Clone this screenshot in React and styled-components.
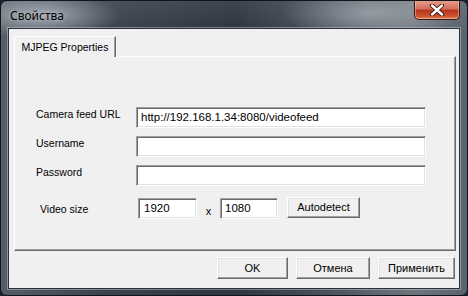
import React from "react";
import styled, { createGlobalStyle } from "styled-components";

const GlobalStyle = createGlobalStyle`
  html, body {
    margin: 0;
    padding: 0;
    background: #1b2230;
  }
  body {
    font-family: "Liberation Sans", Arial, sans-serif;
  }
`;

const Window = styled.div`
  width: 468px;
  height: 296px;
  box-sizing: border-box;
  display: flex;
  flex-direction: column;
  padding: 0 7px 6px 7px;
  border-radius: 7px;
  overflow: hidden;
  background:
    radial-gradient(ellipse 80px 24px at 40px 14px, rgba(178, 184, 192, 0.85), rgba(178, 184, 192, 0) 100%),
    radial-gradient(ellipse 90px 26px at 370px 12px, rgba(170, 176, 184, 0.7), rgba(170, 176, 184, 0) 100%),
    linear-gradient(to bottom, rgba(255, 255, 255, 0.08), rgba(0, 0, 0, 0) 30px),
    linear-gradient(to right, #555d68 0%, #3b4350 22%, #2e3541 50%, #4a515b 70%, #6f757d 88%, #5a626c 100%);
  border: 1px solid #10151d;
`;

const TitleBar = styled.div`
  height: 27px;
  display: flex;
  align-items: flex-start;
  flex-shrink: 0;
`;

const Title = styled.div`
  font-family: "Noto Sans", "Open Sans", sans-serif;
  font-size: 12px;
  color: #000;
  margin: 6px 0 0 2px;
  text-shadow: 0 0 4px rgba(230, 232, 236, 0.6);
`;

const CloseButton = styled.div`
  margin: -1px 0 0 auto;
  width: 46px;
  height: 20px;
  box-sizing: border-box;
  border: 1px solid #3b1710;
  border-top: none;
  border-radius: 0 0 5px 5px;
  background: linear-gradient(to bottom, #e7a293 0%, #d3705b 45%, #b8361c 55%, #c8522f 85%, #e08a5f 100%);
  box-shadow: inset 0 0 0 1px rgba(255, 220, 200, 0.45);
  display: flex;
  align-items: center;
  justify-content: center;
`;

const Client = styled.div`
  flex: 1;
  display: flex;
  flex-direction: column;
  background: #f0f0f0;
  border: 1px solid #2a313b;
  box-shadow: 0 0 0 1px rgba(210, 218, 226, 0.45);
  padding: 7px 3px 8px 5px;
`;

const TabStrip = styled.div`
  display: flex;
`;

const Tab = styled.div`
  width: 102px;
  height: 21px;
  box-sizing: border-box;
  font-size: 10.5px;
  color: #000;
  display: flex;
  align-items: center;
  justify-content: center;
  background: #f0f0f0;
  border-top: 1px solid #fff;
  border-left: 1px solid #fff;
  border-right: 1px solid #696969;
  box-shadow: inset -1px 0 0 #a0a0a0;
  position: relative;
  margin-bottom: -1px;
  z-index: 1;
  padding-bottom: 1px;
`;

const Panel = styled.div`
  width: 442px;
  height: 195px;
  box-sizing: border-box;
  border-top: 1px solid #fff;
  border-left: 1px solid #fff;
  border-right: 1px solid #696969;
  border-bottom: 1px solid #696969;
  box-shadow: inset -1px -1px 0 #a0a0a0;
  padding: 50px 0 0 21px;
  display: flex;
  flex-direction: column;
`;

const Form = styled.div`
  display: grid;
  grid-template-columns: 100px 290px;
  grid-auto-rows: 21px;
  row-gap: 8px;
`;

const Label = styled.div`
  font-size: 10.5px;
  color: #000;
  line-height: 14px;
  padding-left: ${(p) => p.indent || 0}px;
  width: ${(p) => p.width || "auto"};
  box-sizing: border-box;
  flex-shrink: 0;
`;

const Input = styled.div`
  width: ${(p) => p.width || "100%"};
  height: 21px;
  box-sizing: border-box;
  background: #fff;
  border-style: solid;
  border-width: 1px;
  border-color: #a0a0a0 #fff #fff #a0a0a0;
  box-shadow: inset 1px 1px 0 #696969, inset -1px -1px 0 #e3e3e3;
  font-size: 11.5px;
  color: #000;
  line-height: 19px;
  padding: 0 0 0 ${(p) => p.pad || 4}px;
  white-space: nowrap;
  overflow: hidden;
`;

const VideoRow = styled.div`
  display: flex;
  align-items: center;
  margin-top: 12px;
  height: 21px;
`;

const Times = styled.span`
  font-size: 11px;
  color: #000;
  width: 23px;
  text-align: center;
  padding-top: 4px;
`;

const Button = styled.div`
  width: ${(p) => p.width}px;
  height: ${(p) => p.height || 22}px;
  box-sizing: border-box;
  background: #f0f0f0;
  border-style: solid;
  border-width: 1px;
  border-color: #fff #696969 #696969 #fff;
  box-shadow: inset -1px -1px 0 #a0a0a0, inset 1px 1px 0 #e3e3e3;
  font-size: 11px;
  color: #000;
  display: flex;
  align-items: center;
  justify-content: center;
  margin-left: ${(p) => p.gap || 0}px;
  margin-top: ${(p) => p.lift || 0}px;
`;

const ButtonRow = styled.div`
  display: flex;
  justify-content: flex-end;
  margin-top: 6px;
  padding-right: 1px;
`;

const CloseIcon = () => (
  <svg width="16" height="12" viewBox="0 0 16 12">
    <path d="M3 1.5 L13 10.5 M13 1.5 L3 10.5" stroke="#3a1209" strokeWidth="4.2" strokeLinecap="round" />
    <path d="M3 1.5 L13 10.5 M13 1.5 L3 10.5" stroke="#fff" strokeWidth="2.4" strokeLinecap="round" />
  </svg>
);

export default function App() {
  return (
    <>
      <GlobalStyle />
      <Window>
        <TitleBar>
          <Title>Свойства</Title>
          <CloseButton>
            <CloseIcon />
          </CloseButton>
        </TitleBar>
        <Client>
          <TabStrip>
            <Tab>MJPEG Properties</Tab>
          </TabStrip>
          <Panel>
            <Form>
              <Label>Camera feed URL</Label>
              <Input pad={4}>http://192.168.1.34:8080/videofeed</Input>
              <Label>Username</Label>
              <Input />
              <Label>Password</Label>
              <Input />
            </Form>
            <VideoRow>
              <Label indent={4} width="102px">Video size</Label>
              <Input width="59px" pad={5}>1920</Input>
              <Times>x</Times>
              <Input width="58px" pad={4}>1080</Input>
              <Button width={73} height={21} gap={9} lift={-3}>Autodetect</Button>
            </VideoRow>
          </Panel>
          <ButtonRow>
            <Button width={71}>OK</Button>
            <Button width={74} gap={8}>Отмена</Button>
            <Button width={77} gap={8}>Применить</Button>
          </ButtonRow>
        </Client>
      </Window>
    </>
  );
}
